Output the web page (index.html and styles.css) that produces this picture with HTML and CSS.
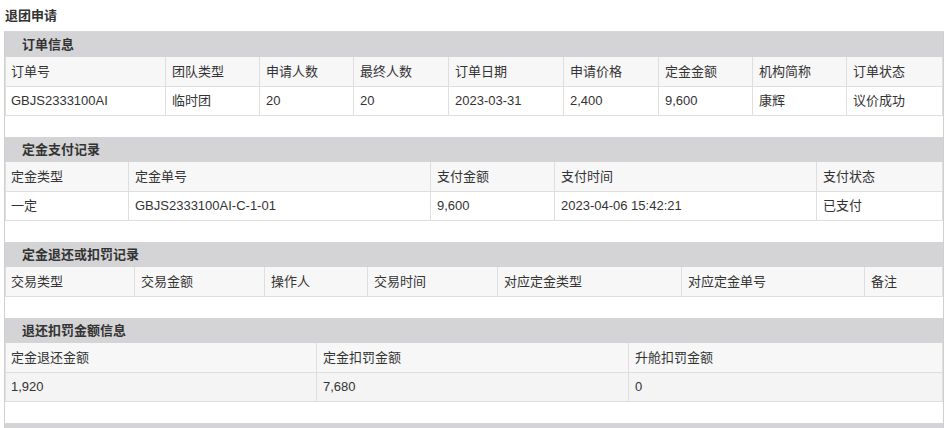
FILE: index.html
```html
<!DOCTYPE html>
<html lang="zh">
<head>
<meta charset="utf-8">
<link rel="stylesheet" href="styles.css">
</head>
<body>
<div class="page-title">退团申请</div>
<div class="panel">
  <div class="sec-head">订单信息</div>
  <div class="grid g1 head">
    <div>订单号</div><div>团队类型</div><div>申请人数</div><div>最终人数</div><div>订单日期</div><div>申请价格</div><div>定金金额</div><div>机构简称</div><div>订单状态</div>
  </div>
  <div class="grid g1 data">
    <div>GBJS2333100AI</div><div>临时团</div><div>20</div><div>20</div><div>2023-03-31</div><div>2,400</div><div>9,600</div><div>康辉</div><div>议价成功</div>
  </div>
  <div class="gap"></div>

  <div class="sec-head">定金支付记录</div>
  <div class="grid g2 head">
    <div>定金类型</div><div>定金单号</div><div>支付金额</div><div>支付时间</div><div>支付状态</div>
  </div>
  <div class="grid g2 data">
    <div>一定</div><div>GBJS2333100AI-C-1-01</div><div>9,600</div><div>2023-04-06 15:42:21</div><div>已支付</div>
  </div>
  <div class="gap"></div>

  <div class="sec-head">定金退还或扣罚记录</div>
  <div class="grid g3 head">
    <div>交易类型</div><div>交易金额</div><div>操作人</div><div>交易时间</div><div>对应定金类型</div><div>对应定金单号</div><div>备注</div>
  </div>
  <div class="gap"></div>

  <div class="sec-head">退还扣罚金额信息</div>
  <div class="grid g4 head">
    <div>定金退还金额</div><div>定金扣罚金额</div><div>升舱扣罚金额</div>
  </div>
  <div class="grid g4 data alt">
    <div>1,920</div><div>7,680</div><div>0</div>
  </div>
  <div class="gap"></div>

  <div class="sec-head"></div>
</div>
</body>
</html>
```

FILE: styles.css
```css
* { box-sizing: border-box; }
html, body { margin: 0; padding: 0; background: #fff; }
body {
  font-family: "Liberation Sans", Arial, "Noto Sans CJK SC", sans-serif;
  font-size: 13px;
  color: #333;
  overflow: hidden;
}
.page-title {
  font-weight: bold;
  height: 31px;
  line-height: 31px;
  padding-left: 5px;
}
.panel {
  margin-left: 4px;
  width: 940px;
  border-top: 1px solid #d6d5d8;
  border-left: 1px solid #cfcfcf;
  border-right: 1px solid #cfcfcf;
}
.sec-head {
  background: #d4d3d6;
  height: 25px;
  line-height: 25px;
  padding-left: 17px;
  font-weight: bold;
}
.grid { display: grid; }
.grid > div {
  border-right: 1px solid #dedede;
  border-bottom: 1px solid #dedede;
  padding-left: 6px;
  white-space: nowrap;
  overflow: hidden;
}
.grid > div:first-child { border-left: 1px solid #dedede; padding-left: 5px; }
.head > div {
  background: #f7f7f7;
  height: 30px;
  line-height: 29px;
}
.data > div {
  background: #fff;
  height: 29px;
  line-height: 28px;
}
.data.alt > div { background: #f4f4f4; }
.g1 { grid-template-columns: 161px 94px 94px 95px 115px 95px 94px 94px 96px; }
.g2 { grid-template-columns: 124px 302px 124px 262px 126px; }
.g3 { grid-template-columns: 130px 130px 103px 130px 184px 183px 78px; }
.g4 { grid-template-columns: 312px 312px 314px; }
.gap { height: 21px; }
```
